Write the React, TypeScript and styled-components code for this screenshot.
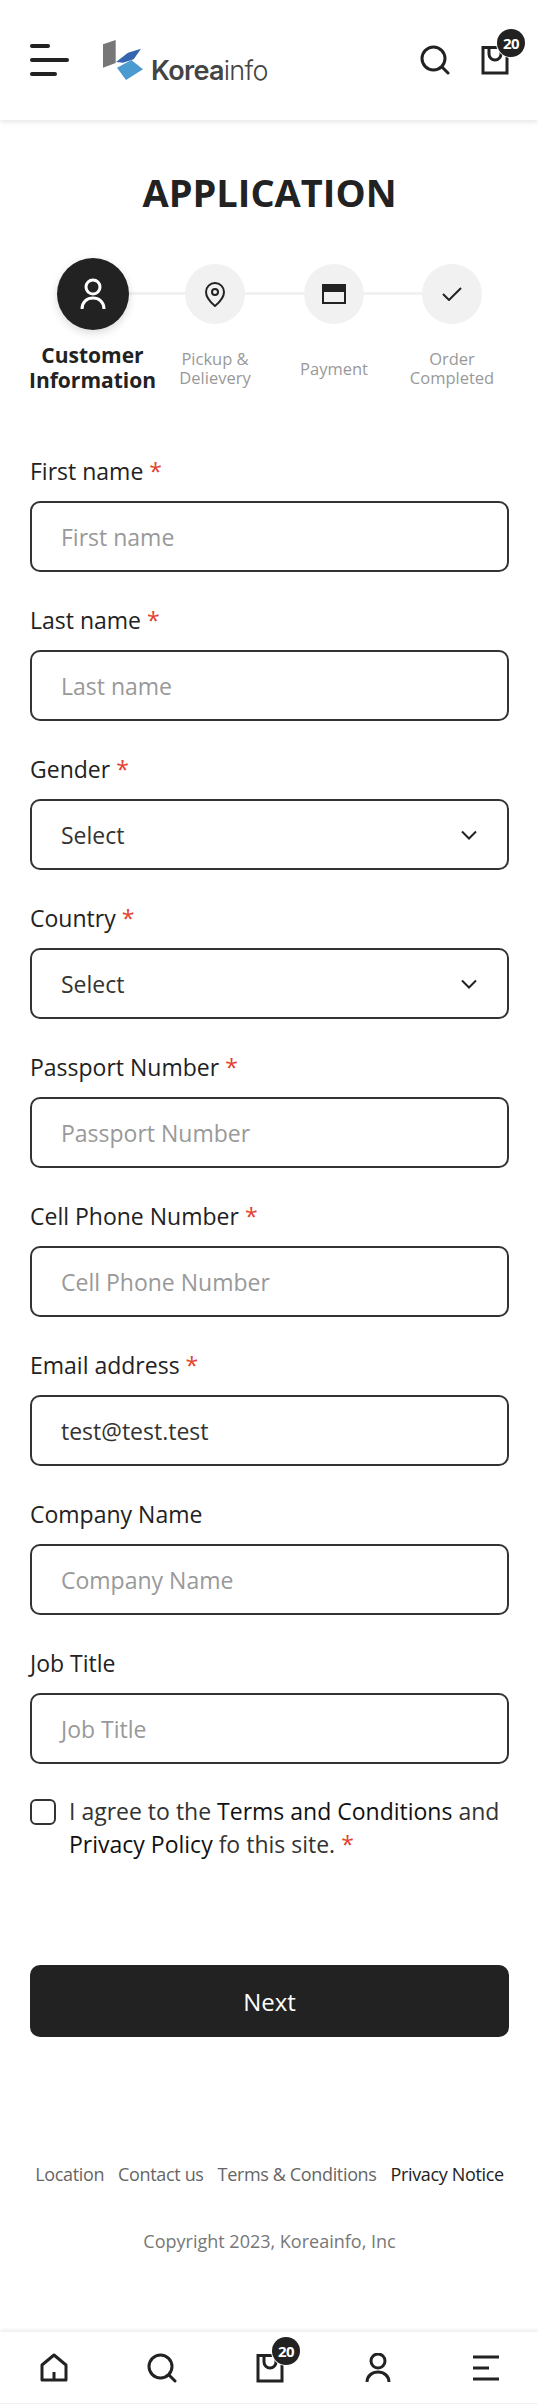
import styled, { createGlobalStyle } from 'styled-components';

const GlobalStyle = createGlobalStyle`
  * {
    box-sizing: border-box;
  }
  html, body {
    margin: 0;
    padding: 0;
    background: #fff;
    font-family: 'Open Sans', 'Liberation Sans', sans-serif;
    color: #222;
  }
`;

const Page = styled.div`
  width: 538px;
  height: 2404px;
  display: flex;
  flex-direction: column;
`;

const Header = styled.header`
  height: 120px;
  flex: none;
  display: flex;
  align-items: center;
  padding: 0 28px 0 30px;
  background: #fff;
  box-shadow: 0 2px 5px rgba(0, 0, 0, 0.1);
`;

const Burger = styled.div`
  display: flex;
  flex-direction: column;
  gap: 9.5px;
  width: 39px;
`;

const BurgerBar = styled.span<{ $w: number }>`
  display: block;
  height: 4.5px;
  width: ${(p) => p.$w}px;
  background: #222;
  border-radius: 3px;
`;

const Logo = styled.div`
  display: flex;
  align-items: flex-end;
  margin-left: 34px;
  height: 41px;
`;

const LogoText = styled.div`
  font-family: 'Inter', sans-serif;
  font-size: 27px;
  line-height: 20px;
  letter-spacing: -0.7px;
  color: #444;
  margin-left: 8px;
  font-weight: 600;
  span {
    font-weight: 300;
  }
`;

const HeaderActions = styled.div`
  margin-left: auto;
  display: flex;
  align-items: center;
  gap: 30px;
`;

const IconBox = styled.div`
  position: relative;
  display: flex;
`;

const Badge = styled.span`
  position: absolute;
  top: -16px;
  right: -15px;
  width: 28px;
  height: 28px;
  border-radius: 50%;
  background: #222;
  box-shadow: 0 0 0 1px #fff;
  color: #fff;
  font-size: 15px;
  font-weight: 700;
  letter-spacing: -0.5px;
  display: flex;
  align-items: center;
  justify-content: center;
`;

const Main = styled.main`
  flex: 1;
  padding: 0 29px 0 30px;
`;

const Title = styled.h1`
  margin: 49px 0 0;
  text-align: center;
  font-size: 38px;
  line-height: 46px;
  font-weight: 700;
  color: #222;
`;

const Steps = styled.div`
  position: relative;
  display: grid;
  grid-template-columns: 125px 120px 118px 118px;
  margin-top: 44px;
`;

const StepTrack = styled.div`
  position: absolute;
  top: 33px;
  left: 63px;
  width: 359px;
  height: 3px;
  background: #f1f1f1;
`;

const Step = styled.div`
  position: relative;
  display: flex;
  flex-direction: column;
  align-items: center;
`;

const StepIconSlot = styled.div`
  height: 70px;
  display: flex;
  align-items: center;
`;

const StepCircle = styled.div<{ $active?: boolean }>`
  width: ${(p) => (p.$active ? 72 : 60)}px;
  height: ${(p) => (p.$active ? 72 : 60)}px;
  border-radius: 50%;
  background: ${(p) => (p.$active ? '#222' : '#f1f1f1')};
  box-shadow: ${(p) => (p.$active ? '0 3px 8px rgba(0,0,0,0.15)' : 'none')};
  display: flex;
  align-items: center;
  justify-content: center;
`;

const StepLabel = styled.div<{ $active?: boolean }>`
  height: 50px;
  margin-top: 14px;
  display: flex;
  align-items: center;
  text-align: center;
  white-space: nowrap;
  font-size: ${(p) => (p.$active ? 21 : 16.5)}px;
  line-height: ${(p) => (p.$active ? 25 : 19)}px;
  font-weight: ${(p) => (p.$active ? 700 : 400)};
  color: ${(p) => (p.$active ? '#222' : '#999')};
`;

const Form = styled.form`
  margin-top: 60px;
  display: flex;
  flex-direction: column;
  gap: 30px;
`;

const Field = styled.div`
  display: flex;
  flex-direction: column;
`;

const Label = styled.label`
  height: 34px;
  margin-bottom: 14px;
  font-size: 23px;
  line-height: 36px;
  color: #222;
`;

const Required = styled.em`
  font-style: normal;
  color: #e2402c;
  margin-left: 6px;
`;

const Input = styled.div<{ $filled?: boolean }>`
  height: 71px;
  border: 2px solid #333;
  border-radius: 10px;
  padding: 0 29px;
  display: flex;
  align-items: center;
  justify-content: space-between;
  font-size: 23px;
  color: ${(p) => (p.$filled ? '#333' : '#999')};
`;

const Agree = styled.div`
  display: flex;
  gap: 13px;
  margin-top: 5px;
`;

const CheckBox = styled.span`
  flex: none;
  width: 26px;
  height: 26px;
  border: 2px solid #333;
  border-radius: 6px;
`;

const AgreeText = styled.p`
  margin: -4px 0 0;
  font-size: 23px;
  line-height: 33px;
  color: #333;
  white-space: nowrap;
  b {
    font-weight: 400;
    color: #111;
  }
`;

const NextButton = styled.button`
  display: block;
  width: 100%;
  height: 72px;
  margin-top: 104px;
  border: 0;
  border-radius: 10px;
  background: #222;
  color: #fff;
  font-family: inherit;
  font-size: 24px;
`;

const FooterLinks = styled.nav`
  margin-top: 125px;
  display: flex;
  justify-content: center;
  gap: 14px;
  font-size: 18px;
  line-height: 24px;
  letter-spacing: -0.35px;
  white-space: nowrap;
  color: #666;
`;

const FooterLink = styled.a<{ $strong?: boolean }>`
  color: ${(p) => (p.$strong ? '#222' : '#666')};
`;

const Copyright = styled.p`
  margin: 42px 0 0;
  text-align: center;
  font-size: 18px;
  line-height: 26px;
  color: #777;
`;

const BottomNav = styled.nav`
  height: 72px;
  flex: none;
  display: flex;
  align-items: center;
  justify-content: space-between;
  padding: 0 37px 0 39px;
  background: #fff;
  border-bottom: 1px solid #f2f2f2;
  box-shadow: 0 -2px 4px rgba(0, 0, 0, 0.08);
`;

const Ico = ({ children }: { children: React.ReactNode }) => (
  <svg width={30} height={30} viewBox="0 0 30 30" fill="none" stroke="#222" strokeWidth={3}>
    {children}
  </svg>
);

const SearchIcon = () => (
  <Ico>
    <circle cx="13.5" cy="13.5" r="11.5" />
    <path d="M22 22l6 6" strokeLinecap="round" />
  </Ico>
);

const BagIcon = () => (
  <IconBox>
    <Ico>
      <rect x="3" y="2.5" width="24" height="25.5" />
      <path d="M9 3v6a6 6 0 0 0 12 0V3" />
    </Ico>
    <Badge>20</Badge>
  </IconBox>
);

const fields = [
  { label: 'First name', required: true, placeholder: 'First name' },
  { label: 'Last name', required: true, placeholder: 'Last name' },
  { label: 'Gender', required: true, select: true },
  { label: 'Country', required: true, select: true },
  { label: 'Passport Number', required: true, placeholder: 'Passport Number' },
  { label: 'Cell Phone Number', required: true, placeholder: 'Cell Phone Number' },
  { label: 'Email address', required: true, value: 'test@test.test' },
  { label: 'Company Name', placeholder: 'Company Name' },
  { label: 'Job Title', placeholder: 'Job Title' },
];

const Chevron = () => (
  <svg width="18" height="18" viewBox="0 0 18 18" fill="none" stroke="#222" strokeWidth="2">
    <path d="M2 5.5l7 7 7-7" />
  </svg>
);

export default function App() {
  return (
    <Page>
      <GlobalStyle />
      <Header>
        <Burger>
          <BurgerBar $w={20} />
          <BurgerBar $w={39} />
          <BurgerBar $w={27} />
        </Burger>
        <Logo>
          <svg width="40" height="41" viewBox="0 0 40 41">
            <path d="M0 4.3L12.7 0V23L0 27.7Z" fill="#777" />
            <path d="M13 22L25 12.7L38 8.7L30.7 19.3L20 22.7Z" fill="#3566ad" />
            <path d="M14 27.7L28.3 20L40 29.3L23 40Z" fill="#4b9ad0" />
          </svg>
          <LogoText>
            Korea<span>info</span>
          </LogoText>
        </Logo>
        <HeaderActions>
          <SearchIcon />
          <BagIcon />
        </HeaderActions>
      </Header>
      <Main>
        <Title>APPLICATION</Title>
        <Steps>
          <StepTrack />
          <Step>
            <StepIconSlot>
              <StepCircle $active>
                <svg width="26" height="32" viewBox="0 0 26 32" fill="none" stroke="#fff" strokeWidth="3">
                  <circle cx="13" cy="9" r="7" />
                  <path d="M2 31c0-7 5-11 11-11s11 4 11 11" />
                </svg>
              </StepCircle>
            </StepIconSlot>
            <StepLabel $active>
              Customer
              <br />
              Information
            </StepLabel>
          </Step>
          <Step>
            <StepIconSlot>
              <StepCircle>
                <svg width="22" height="26" viewBox="0 0 22 26" fill="none" stroke="#222" strokeWidth="2">
                  <path d="M11 25C5 20 2 15 2 11a9 9 0 0 1 18 0c0 4-3 9-9 14Z" />
                  <circle cx="11" cy="11" r="3" />
                </svg>
              </StepCircle>
            </StepIconSlot>
            <StepLabel>
              Pickup &amp;
              <br />
              Delievery
            </StepLabel>
          </Step>
          <Step>
            <StepIconSlot>
              <StepCircle>
                <svg width="24" height="20" viewBox="0 0 24 20" fill="none" stroke="#222" strokeWidth="2">
                  <rect x="1" y="1" width="22" height="18" />
                  <rect x="1" y="3" width="22" height="4" fill="#222" />
                </svg>
              </StepCircle>
            </StepIconSlot>
            <StepLabel>Payment</StepLabel>
          </Step>
          <Step>
            <StepIconSlot>
              <StepCircle>
                <svg width="20" height="14" viewBox="0 0 20 14" fill="none" stroke="#222" strokeWidth="2">
                  <path d="M1 7l6 6L19 1" />
                </svg>
              </StepCircle>
            </StepIconSlot>
            <StepLabel>
              Order
              <br />
              Completed
            </StepLabel>
          </Step>
        </Steps>
        <Form>
          {fields.map((f) => (
            <Field key={f.label}>
              <Label>
                {f.label}
                {f.required && <Required>*</Required>}
              </Label>
              <Input $filled={f.select || !!f.value}>
                {f.select ? 'Select' : f.value || f.placeholder}
                {f.select && <Chevron />}
              </Input>
            </Field>
          ))}
          <Agree>
            <CheckBox />
            <AgreeText>
              I agree to the <b>Terms and Conditions</b> and
              <br />
              <b>Privacy Policy</b> fo this site.<Required>*</Required>
            </AgreeText>
          </Agree>
        </Form>
        <NextButton type="button">Next</NextButton>
        <FooterLinks>
          <FooterLink>Location</FooterLink>
          <FooterLink>Contact us</FooterLink>
          <FooterLink>Terms &amp; Conditions</FooterLink>
          <FooterLink $strong>Privacy Notice</FooterLink>
        </FooterLinks>
        <Copyright>Copyright 2023, Koreainfo, Inc</Copyright>
      </Main>
      <BottomNav>
        <Ico>
          <path d="M3 27V12L15 2l12 10v15Z" strokeLinejoin="round" />
          <path d="M15 19v8" />
        </Ico>
        <SearchIcon />
        <BagIcon />
        <Ico>
          <circle cx="15" cy="8" r="7" />
          <path d="M4 29c0-6 5-10 11-10s11 4 11 10" />
        </Ico>
        <Ico>
          <path d="M2 4h26M2 15h16M2 26h26" />
        </Ico>
      </BottomNav>
    </Page>
  );
}
